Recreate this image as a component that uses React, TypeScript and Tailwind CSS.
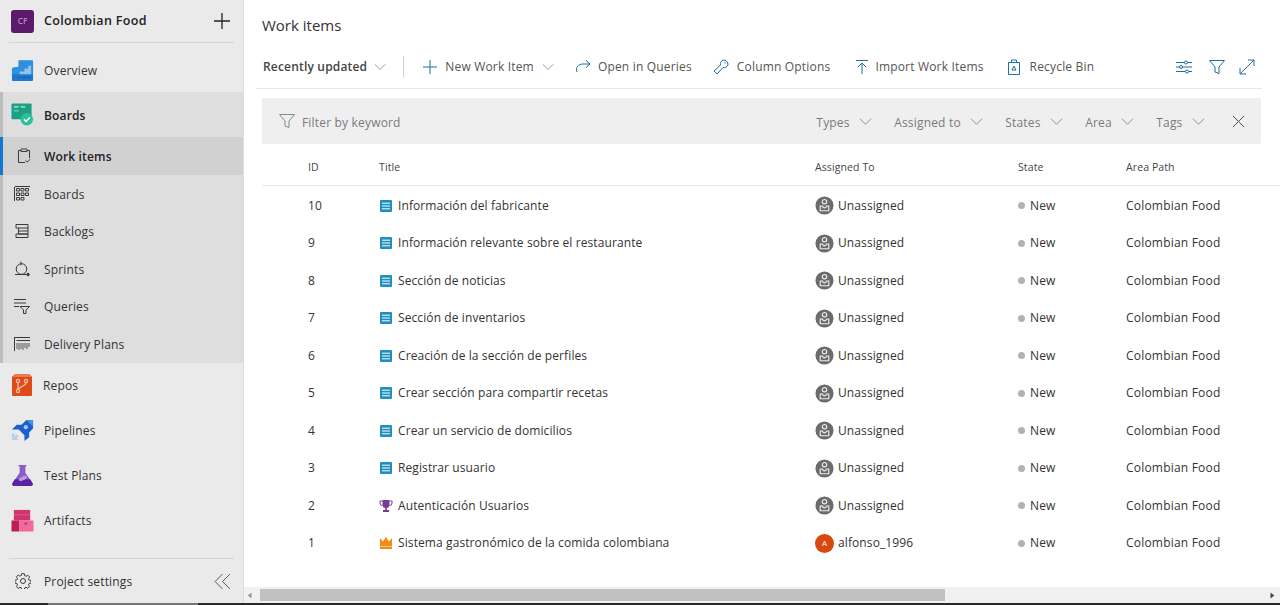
import React from "react";

const FONT = "font-['Open_Sans','Noto_Sans',sans-serif]";

type IconProps = { className?: string };

const Chevron = ({ className = "w-3.5 h-3.5 text-[#8a8a8a]" }: IconProps) => (
  <svg viewBox="0 0 14 14" className={className} fill="none" stroke="currentColor" strokeWidth={1}>
    <path d="M1 4l6 6 6-6" />
  </svg>
);

const OverviewIcon = () => (
  <svg viewBox="0 0 24 24" className="w-[23px] h-[23px]">
    <path d="M8 1.5h14a1 1 0 0 1 1 1V22a1 1 0 0 1-1 1H2a1 1 0 0 1-1-1V9.5l7-1.5z" fill="#1e78cf" />
    <path d="M1 9.5l7-1.5V1.5h14a1 1 0 0 1 1 1V16H1z" fill="#2f8fe0" />
    <path d="M9 16v-3h5v-3h4V7h3v9z" fill="#8fc4ef" />
    <path d="M6 18.5h15v1.5H6z" fill="#1868b8" />
  </svg>
);

const BoardsIcon = () => (
  <svg viewBox="0 0 24 24" className="w-[23px] h-[23px]">
    <rect x="0.5" y="0.5" width="21" height="16.5" rx="1" fill="#1ca083" />
    <rect x="3" y="3" width="5" height="2" fill="#7fd3bf" />
    <rect x="10" y="3" width="5" height="2" fill="#7fd3bf" />
    <rect x="3" y="7" width="5" height="2" fill="#5cc4ac" />
    <circle cx="16.5" cy="17" r="6.5" fill="#2bc09a" />
    <path d="M13.5 17l2.2 2.2 4-4" fill="none" stroke="#fff" strokeWidth={1.5} />
  </svg>
);

const ReposIcon = () => (
  <svg viewBox="0 0 22 24" className="w-[22px] h-[24px]">
    <path d="M4 1h14l3 3v18a1 1 0 0 1-1 1H2a1 1 0 0 1-1-1V4z" fill="#dd4b1a" />
    <path d="M4 1h14l3 3H1z" fill="#ee7a4a" />
    <g fill="none" stroke="#f7b69c" strokeWidth={1.4}>
      <circle cx="7" cy="18" r="1.6" />
      <circle cx="7" cy="8" r="1.6" />
      <circle cx="15" cy="8" r="1.6" />
      <path d="M7 9.6v6.8M15 9.6c0 4-6 3-7 6.4" />
    </g>
  </svg>
);

const PipelinesIcon = () => (
  <svg viewBox="0 0 24 24" className="w-[23px] h-[23px]">
    <path d="M23 1v9l-4 4v5l-5 4v-6l-6-6H1l5-5h5l5-5z" fill="#1c5fd0" />
    <path d="M23 1v7l-7-7z" fill="#4b8bea" />
    <circle cx="15.5" cy="8.5" r="2.2" fill="#a9c9f5" />
    <path d="M1 15h3v3l2-2 2 2-2 2 2 2H1z" fill="#b7d0f2" />
  </svg>
);

const TestPlansIcon = () => (
  <svg viewBox="0 0 24 24" className="w-[23px] h-[23px]">
    <path d="M8 1h8v1.5h-1V9l7.5 11a2 2 0 0 1-1.6 3H3.1a2 2 0 0 1-1.6-3L9 9V2.5H8z" fill="#8a5cc9" />
    <path d="M4 16h16l2.5 4a2 2 0 0 1-1.6 3H3.1a2 2 0 0 1-1.6-3z" fill="#5a23a3" />
    <ellipse cx="12.5" cy="15" rx="4.5" ry="2" transform="rotate(-25 12.5 15)" fill="#b79be3" />
  </svg>
);

const ArtifactsIcon = () => (
  <svg viewBox="0 0 24 24" className="w-[23px] h-[23px]">
    <rect x="3" y="1" width="17" height="11" fill="#d0336f" />
    <rect x="3" y="5.5" width="17" height="1" fill="#e35b8f" />
    <rect x="0.5" y="12" width="8" height="11.5" fill="#bf1d58" />
    <rect x="8.5" y="12" width="15" height="11.5" fill="#f06a9b" />
    <rect x="14" y="14" width="3" height="2.5" fill="#c8356f" />
  </svg>
);

const stroke = { fill: "none", stroke: "#3a3a3a", strokeWidth: 1 };

const WorkItemsIcon = () => (
  <svg viewBox="0 0 16 16" className="w-4 h-4" {...stroke}>
    <path d="M4 2.5H1.5v12H8M10 2.5h2.500V10M4 1h6v2.500H4zM8.500 12.500l1.700 1.700 3-3" />
  </svg>
);
const BoardIcon = () => (
  <svg viewBox="0 0 16 16" className="w-4 h-4" {...stroke}>
    <path d="M.5 1v14M1 .5h15M2.500 2.500h3v2.500h-3zM7 2.500h3v2.500H7zM11.500 2.500h3v2.500h-3zM2.500 7h3v2.500h-3zM7 7h3v2.500H7zM11.500 7h3v2.500h-3zM2.500 11.500h3V14h-3zM7 11.500h3V14H7z" />
  </svg>
);
const BacklogIcon = () => (
  <svg viewBox="0 0 16 16" className="w-4 h-4" {...stroke}>
    <path d="M2 1.500h12V5H2zM4.500 5v6H14M14 5v6M2 11h12v3.500H2zM4.500 8h9.500" />
  </svg>
);
const SprintIcon = () => (
  <svg viewBox="0 0 16 16" className="w-4 h-4" {...stroke}>
    <circle cx="7.500" cy="8" r="5.300" />
    <path d="M6 .8l2 1.700-2 1.700M1 13.500h11" />
    <circle cx="14" cy="13.500" r="1.300" fill="#3a3a3a" />
  </svg>
);
const QueryIcon = () => (
  <svg viewBox="0 0 16 16" className="w-4 h-4" {...stroke}>
    <path d="M0 1.500h12M0 5h12M0 8.500h5M6 8.500h9.500l-3.500 3.500v3.500h-2.500V12z" />
  </svg>
);
const PlansIcon = () => (
  <svg viewBox="0 0 16 16" className="w-4 h-4" {...stroke}>
    <path d="M.5 1v14M.5 1.500H16M2.500 4.500H16" />
    <path d="M3 7v6M5 7v7M7 7v6M9 7v7M11 7v5M13 7v6M15 7v4" strokeWidth={0.8} />
  </svg>
);
const GearIcon = () => (
  <svg viewBox="0 0 16 16" className="w-4 h-4" {...stroke}>
    <path d="M6.700.7h2.600l.4 2 1.400.6 1.700-1.100 1.800 1.800-1.100 1.700.6 1.400 2 .4v2.600l-2 .4-.6 1.400 1.100 1.700-1.800 1.800-1.700-1.100-1.400.6-.4 2H6.700l-.4-2-1.400-.6-1.700 1.100-1.800-1.800 1.100-1.700-.6-1.400-2-.4V7.300l2-.4.6-1.400-1.100-1.700 1.800-1.800 1.700 1.100 1.400-.6z" />
    <circle cx="8" cy="8" r="2.500" />
  </svg>
);

const blueStroke = { fill: "none", stroke: "#1d6f9e", strokeWidth: 1 };

const UnassignedAvatar = () => (
  <svg viewBox="0 0 20 20" className="w-[19px] h-[19px] shrink-0">
    <circle cx="10" cy="10" r="9.500" fill="#6b6b6b" />
    <circle cx="10" cy="6" r="2.300" fill="none" stroke="#eee" strokeWidth={1.2} />
    <path d="M5.500 10.500v5h9v-5h-2.500a2 2 0 0 1-4 0z" fill="none" stroke="#eee" strokeWidth={1.2} />
  </svg>
);

const StoryIcon = () => (
  <svg viewBox="0 0 14 14" className="w-[14px] h-[14px] shrink-0">
    <rect x="1" y="1" width="12" height="12" rx="1" fill="#1f8fbf" />
    <path d="M3 4.200h8M3 7h8M3 9.800h8" stroke="#fff" strokeWidth={1} />
  </svg>
);
const TrophyIcon = () => (
  <svg viewBox="0 0 14 14" className="w-[14px] h-[14px] shrink-0">
    <path d="M3.500 1h7v4.500a3.500 3.500 0 0 1-7 0z" fill="#773b93" />
    <path d="M3.500 2H1v2a2.500 2.500 0 0 0 2.500 2.500M10.500 2H13v2a2.500 2.500 0 0 1-2.500 2.500" fill="none" stroke="#773b93" />
    <path d="M6.200 8.500h1.600v2.500H10v2H4v-2h2.200z" fill="#773b93" />
  </svg>
);
const CrownIcon = () => (
  <svg viewBox="0 0 14 14" className="w-[14px] h-[14px] shrink-0">
    <path d="M1 2l3 3.500L7 1l3 4.500L13 2v11H1z" fill="#f28c14" />
    <path d="M1 10.500h12" stroke="#ffd9a8" strokeWidth={0.8} />
  </svg>
);

const navTop = [{ label: "Overview", icon: <OverviewIcon /> }];
const subNav = [
  { label: "Boards", icon: <BoardIcon /> },
  { label: "Backlogs", icon: <BacklogIcon /> },
  { label: "Sprints", icon: <SprintIcon /> },
  { label: "Queries", icon: <QueryIcon /> },
  { label: "Delivery Plans", icon: <PlansIcon /> },
];
const navBottom = [
  { label: "Repos", icon: <ReposIcon /> },
  { label: "Pipelines", icon: <PipelinesIcon /> },
  { label: "Test Plans", icon: <TestPlansIcon /> },
  { label: "Artifacts", icon: <ArtifactsIcon /> },
];

const rows = [
  { id: 10, title: "Información del fabricante", type: "story" },
  { id: 9, title: "Información relevante sobre el restaurante", type: "story" },
  { id: 8, title: "Sección de noticias", type: "story" },
  { id: 7, title: "Sección de inventarios", type: "story" },
  { id: 6, title: "Creación de la sección de perfiles", type: "story" },
  { id: 5, title: "Crear sección para compartir recetas", type: "story" },
  { id: 4, title: "Crear un servicio de domicilios", type: "story" },
  { id: 3, title: "Registrar usuario", type: "story" },
  { id: 2, title: "Autenticación Usuarios", type: "feature" },
  { id: 1, title: "Sistema gastronómico de la comida colombiana", type: "epic", owner: "alfonso_1996" },
];

const filters = ["Types", "Assigned to", "States", "Area", "Tags"];

const Sidebar = () => (
  <aside className="w-[244px] shrink-0 bg-[#eaeaea] border-r border-[#dcdcdc] flex flex-col text-[12px] tracking-[0.15px] text-[#333]">
    <div className="mx-[9px] h-[43px] shrink-0 border-b border-[#d4d4d4] flex items-center pl-[2px] pr-[4px]">
      <div className="w-[23px] h-[23px] rounded-[3px] bg-[#5c1a6b] flex items-center justify-center text-[8px] text-[#b98ac4] font-semibold">
        CF
      </div>
      <span className="ml-[10px] text-[12.500px] tracking-[0.35px] font-semibold text-[#222] flex-1">Colombian Food</span>
      <svg viewBox="0 0 16 16" className="w-4 h-4" fill="none" stroke="#222" strokeWidth={1.3}>
        <path d="M8 0v16M0 8h16" />
      </svg>
    </div>
    {navTop.map((n) => (
      <div key={n.label} className="h-[49px] shrink-0 pt-[5px] flex items-center pl-[11px] gap-[10px]">
        {n.icon}
        <span className="pt-[2px]">{n.label}</span>
      </div>
    ))}
    <div className="bg-[#dedede] border-l-[3px] border-[#bdbdbd] shrink-0 flex flex-col">
      <div className="h-[45px] flex items-center pl-[8px] gap-[10px] font-semibold text-[#222]">
        <BoardsIcon />
        <span className="pt-[2px]">Boards</span>
      </div>
      <div className="h-[38px] -ml-[3px] border-l-[3px] border-[#0f78d4] bg-[#d1d1d1] flex items-center pl-[14px] gap-[11px] font-semibold text-[#222]">
        <WorkItemsIcon />
        <span className="pt-[2px]">Work items</span>
      </div>
      {subNav.map((n) => (
        <div key={n.label} className="h-[37.5px] flex items-center pl-[11px] gap-[14px]">
          {n.icon}
          <span className="pt-[2px]">{n.label}</span>
        </div>
      ))}
    </div>
    {navBottom.map((n) => (
      <div key={n.label} className="h-[45px] shrink-0 flex items-center pl-[11px] gap-[10px]">
        {n.icon}
        <span className="pt-[2px]">{n.label}</span>
      </div>
    ))}
    <div className="mx-[9px] mt-[15px] flex-1 pt-[1px] min-h-0 border-t border-[#d4d4d4] flex items-center pl-[6px] pr-[3px] gap-[13px]">
      <GearIcon />
      <span className="flex-1 pt-[2px]">Project settings</span>
      <svg viewBox="0 0 16 16" className="w-[17px] h-[17px]" fill="none" stroke="#555" strokeWidth={0.9}>
        <path d="M8 1L1 8l7 7M15 1L8 8l7 7" />
      </svg>
    </div>
  </aside>
);

const Toolbar = () => (
  <div className="h-[43px] ml-[12px] mr-[18px] border-b border-[#e6e6e6] flex items-center text-[12px] tracking-[0.18px] text-[#555]">
    <span className="ml-[7px] font-semibold text-[#444]">Recently updated</span>
    <Chevron className="w-3 h-3 ml-[7px] text-[#8a8a8a]" />
    <div className="w-px h-[22px] bg-[#d0d0d0] ml-[17px]" />
    <svg viewBox="0 0 16 16" className="w-4 h-4 ml-[18px]" fill="none" stroke="#1d6f9e" strokeWidth={1}>
      <path d="M8 1v14M1 8h14" />
    </svg>
    <span className="ml-[7px]">New Work Item</span>
    <Chevron className="w-3 h-3 ml-[8px] text-[#8a8a8a]" />
    <svg viewBox="0 0 16 16" className="w-4 h-4 ml-[21px]" {...blueStroke}>
      <path d="M2 13c-2-5 2-8 6-8h7M11 1.500L15 5l-4 3.500" />
    </svg>
    <span className="ml-[7px]">Open in Queries</span>
    <svg viewBox="0 0 16 16" className="w-4 h-4 ml-[21px]" {...blueStroke}>
      <path d="M10 1a4.500 4.500 0 0 1 5 5c-1 2-3 3-5 2.500L4 15l-3-3 6.500-6C7 4 8 2 10 1zM11.500 3l1.500 1.500" />
    </svg>
    <span className="ml-[8px]">Column Options</span>
    <svg viewBox="0 0 16 16" className="w-4 h-4 ml-[24px]" {...blueStroke}>
      <path d="M2 1.500h12M8 15V4M4 8l4-4 4 4" />
    </svg>
    <span className="ml-[5px]">Import Work Items</span>
    <svg viewBox="0 0 16 16" className="w-4 h-4 ml-[22px]" {...blueStroke}>
      <path d="M2.500 3.500h11v12h-11zM5.500 3.500V1h5v2.500M6 11l2-4 2 4z" />
    </svg>
    <span className="ml-[8px]">Recycle Bin</span>
    <div className="ml-auto flex items-center gap-[14px] mr-[7px]">
      <svg viewBox="0 0 16 16" className="w-4 h-4 mr-[3px]" {...blueStroke}>
        <path d="M0 3.500h16M0 8h16M0 12.500h16" />
        <circle cx="10" cy="3.500" r="1.500" fill="#fff" />
        <circle cx="5" cy="8" r="1.500" fill="#fff" />
        <circle cx="11" cy="12.500" r="1.500" fill="#fff" />
      </svg>
      <svg viewBox="0 0 16 16" className="w-4 h-4" {...blueStroke}>
        <path d="M.5 1.500h15L10 8v6.500l-4-1.500V8z" />
      </svg>
      <svg viewBox="0 0 16 16" className="w-4 h-4" {...blueStroke}>
        <path d="M1 15L15 1M9 1h6v6M1 9v6h6" />
      </svg>
    </div>
  </div>
);

const FilterBar = () => (
  <div className="h-[46px] mt-[9px] ml-[18px] mr-[19px] bg-[#efefef] rounded-[2px] flex items-center text-[12px] tracking-[0.18px] text-[#7a7a7a]">
    <svg viewBox="0 0 16 16" className="w-4 h-4 ml-[17px]" fill="none" stroke="#888" strokeWidth={1}>
      <path d="M.5 1.500h15L10 8v6.500l-4-1.500V8z" />
    </svg>
    <span className="ml-[7px] pt-[3px]">Filter by keyword</span>
    <div className="ml-auto flex items-center gap-[22.5px]">
      {filters.map((f) => (
        <div key={f} className="flex items-center gap-[9px]">
          <span className="pt-[3px]">{f}</span>
          <Chevron className="w-[13px] h-[13px] text-[#8a8a8a]" />
        </div>
      ))}
      <svg viewBox="0 0 14 14" className="w-[13px] h-[13px] ml-[5px] mr-[16px]" fill="none" stroke="#444" strokeWidth={1}>
        <path d="M1 1l12 12M13 1L1 13" />
      </svg>
    </div>
  </div>
);

const GRID = "grid grid-cols-[71px_436px_203px_108px_1fr] pl-[46px]";

const Table = () => (
  <div className="flex-1 min-h-0 ml-[18px] text-[12px] tracking-[0.1px] text-[#333]">
    <div className={`${GRID} h-[42px] items-center border-b border-[#e6e6e6] text-[10.500px] text-[#444] pt-[6px]`}>
      <span>ID</span>
      <span>Title</span>
      <span>Assigned To</span>
      <span>State</span>
      <span>Area Path</span>
    </div>
    {rows.map((r) => (
      <div key={r.id} className={`${GRID} h-[37.5px] pt-[2px] items-center`}>
        <span>{r.id}</span>
        <div className="flex items-center gap-[5px]">
          {r.type === "story" && <StoryIcon />}
          {r.type === "feature" && <TrophyIcon />}
          {r.type === "epic" && <CrownIcon />}
          <span>{r.title}</span>
        </div>
        <div className="flex items-center gap-[4px]">
          {r.owner ? (
            <div className="w-[19px] h-[19px] rounded-full bg-[#d9480f] text-white text-[8px] flex items-center justify-center shrink-0">
              A
            </div>
          ) : (
            <UnassignedAvatar />
          )}
          <span>{r.owner ?? "Unassigned"}</span>
        </div>
        <div className="flex items-center gap-[5px]">
          <span className="w-[7px] h-[7px] rounded-full bg-[#b2b2b2]" />
          <span>New</span>
        </div>
        <span className="tracking-[0.2px]">Colombian Food</span>
      </div>
    ))}
  </div>
);

const Scrollbar = () => (
  <div className="h-[16px] shrink-0 bg-[#f1f1f1] flex items-center">
    <svg viewBox="0 0 8 8" className="w-[6px] h-[7px] ml-[3px]" fill="#999">
      <path d="M6 0v8L1 4z" />
    </svg>
    <div className="h-[12px] w-[685px] ml-[7px] bg-[#c1c1c1]" />
    <svg viewBox="0 0 8 8" className="w-[6px] h-[7px] ml-auto mr-[5px]" fill="#444">
      <path d="M2 0v8l5-4z" />
    </svg>
  </div>
);

export default function App() {
  return (
    <div className={`${FONT} w-[1280px] h-[605px] overflow-hidden bg-white flex flex-col`}>
      <div className="flex flex-1 min-h-0">
        <Sidebar />
        <main className="flex-1 min-w-0 flex flex-col">
          <h1 className="h-[46px] shrink-0 pl-[18px] pt-[13px] text-[15px] leading-6 text-[#333]">Work items</h1>
          <Toolbar />
          <FilterBar />
          <Table />
          <Scrollbar />
        </main>
      </div>
      <div className="h-[2px] shrink-0 bg-[#2a2a2a] flex">
        <div className="ml-[48px] w-[150px] bg-[#777]" />
      </div>
    </div>
  );
}
